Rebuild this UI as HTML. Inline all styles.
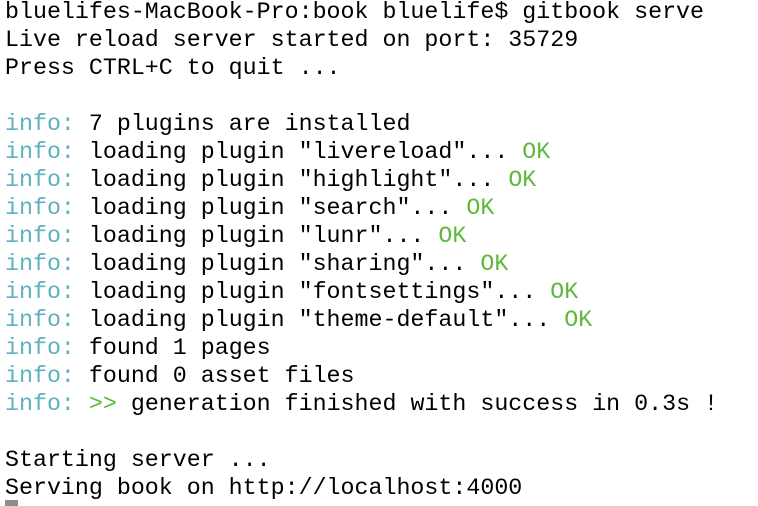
<!DOCTYPE html><html><head><style>
body{margin:0;background:#fff;width:758px;height:506px;overflow:hidden;position:relative}
pre{margin:0;position:absolute;left:5px;top:-2px;font:23.3px/28px "Liberation Mono",monospace;color:#000}
.i{color:#5eb1bf}.o{color:#5fb83c}
.c{position:absolute;left:5px;top:500px;width:13px;height:6px;background:#8c8c8c}
</style></head><body><pre>bluelifes-MacBook-Pro:book bluelife$ gitbook serve
Live reload server started on port: 35729
Press CTRL+C to quit ...

<span class="i">info:</span> 7 plugins are installed
<span class="i">info:</span> loading plugin "livereload"... <span class="o">OK</span>
<span class="i">info:</span> loading plugin "highlight"... <span class="o">OK</span>
<span class="i">info:</span> loading plugin "search"... <span class="o">OK</span>
<span class="i">info:</span> loading plugin "lunr"... <span class="o">OK</span>
<span class="i">info:</span> loading plugin "sharing"... <span class="o">OK</span>
<span class="i">info:</span> loading plugin "fontsettings"... <span class="o">OK</span>
<span class="i">info:</span> loading plugin "theme-default"... <span class="o">OK</span>
<span class="i">info:</span> found 1 pages
<span class="i">info:</span> found 0 asset files
<span class="i">info:</span> <span class="o">&gt;&gt;</span> generation finished with success in 0.3s !

Starting server ...
Serving book on http://localhost:4000</pre><div class="c"></div></body></html>
